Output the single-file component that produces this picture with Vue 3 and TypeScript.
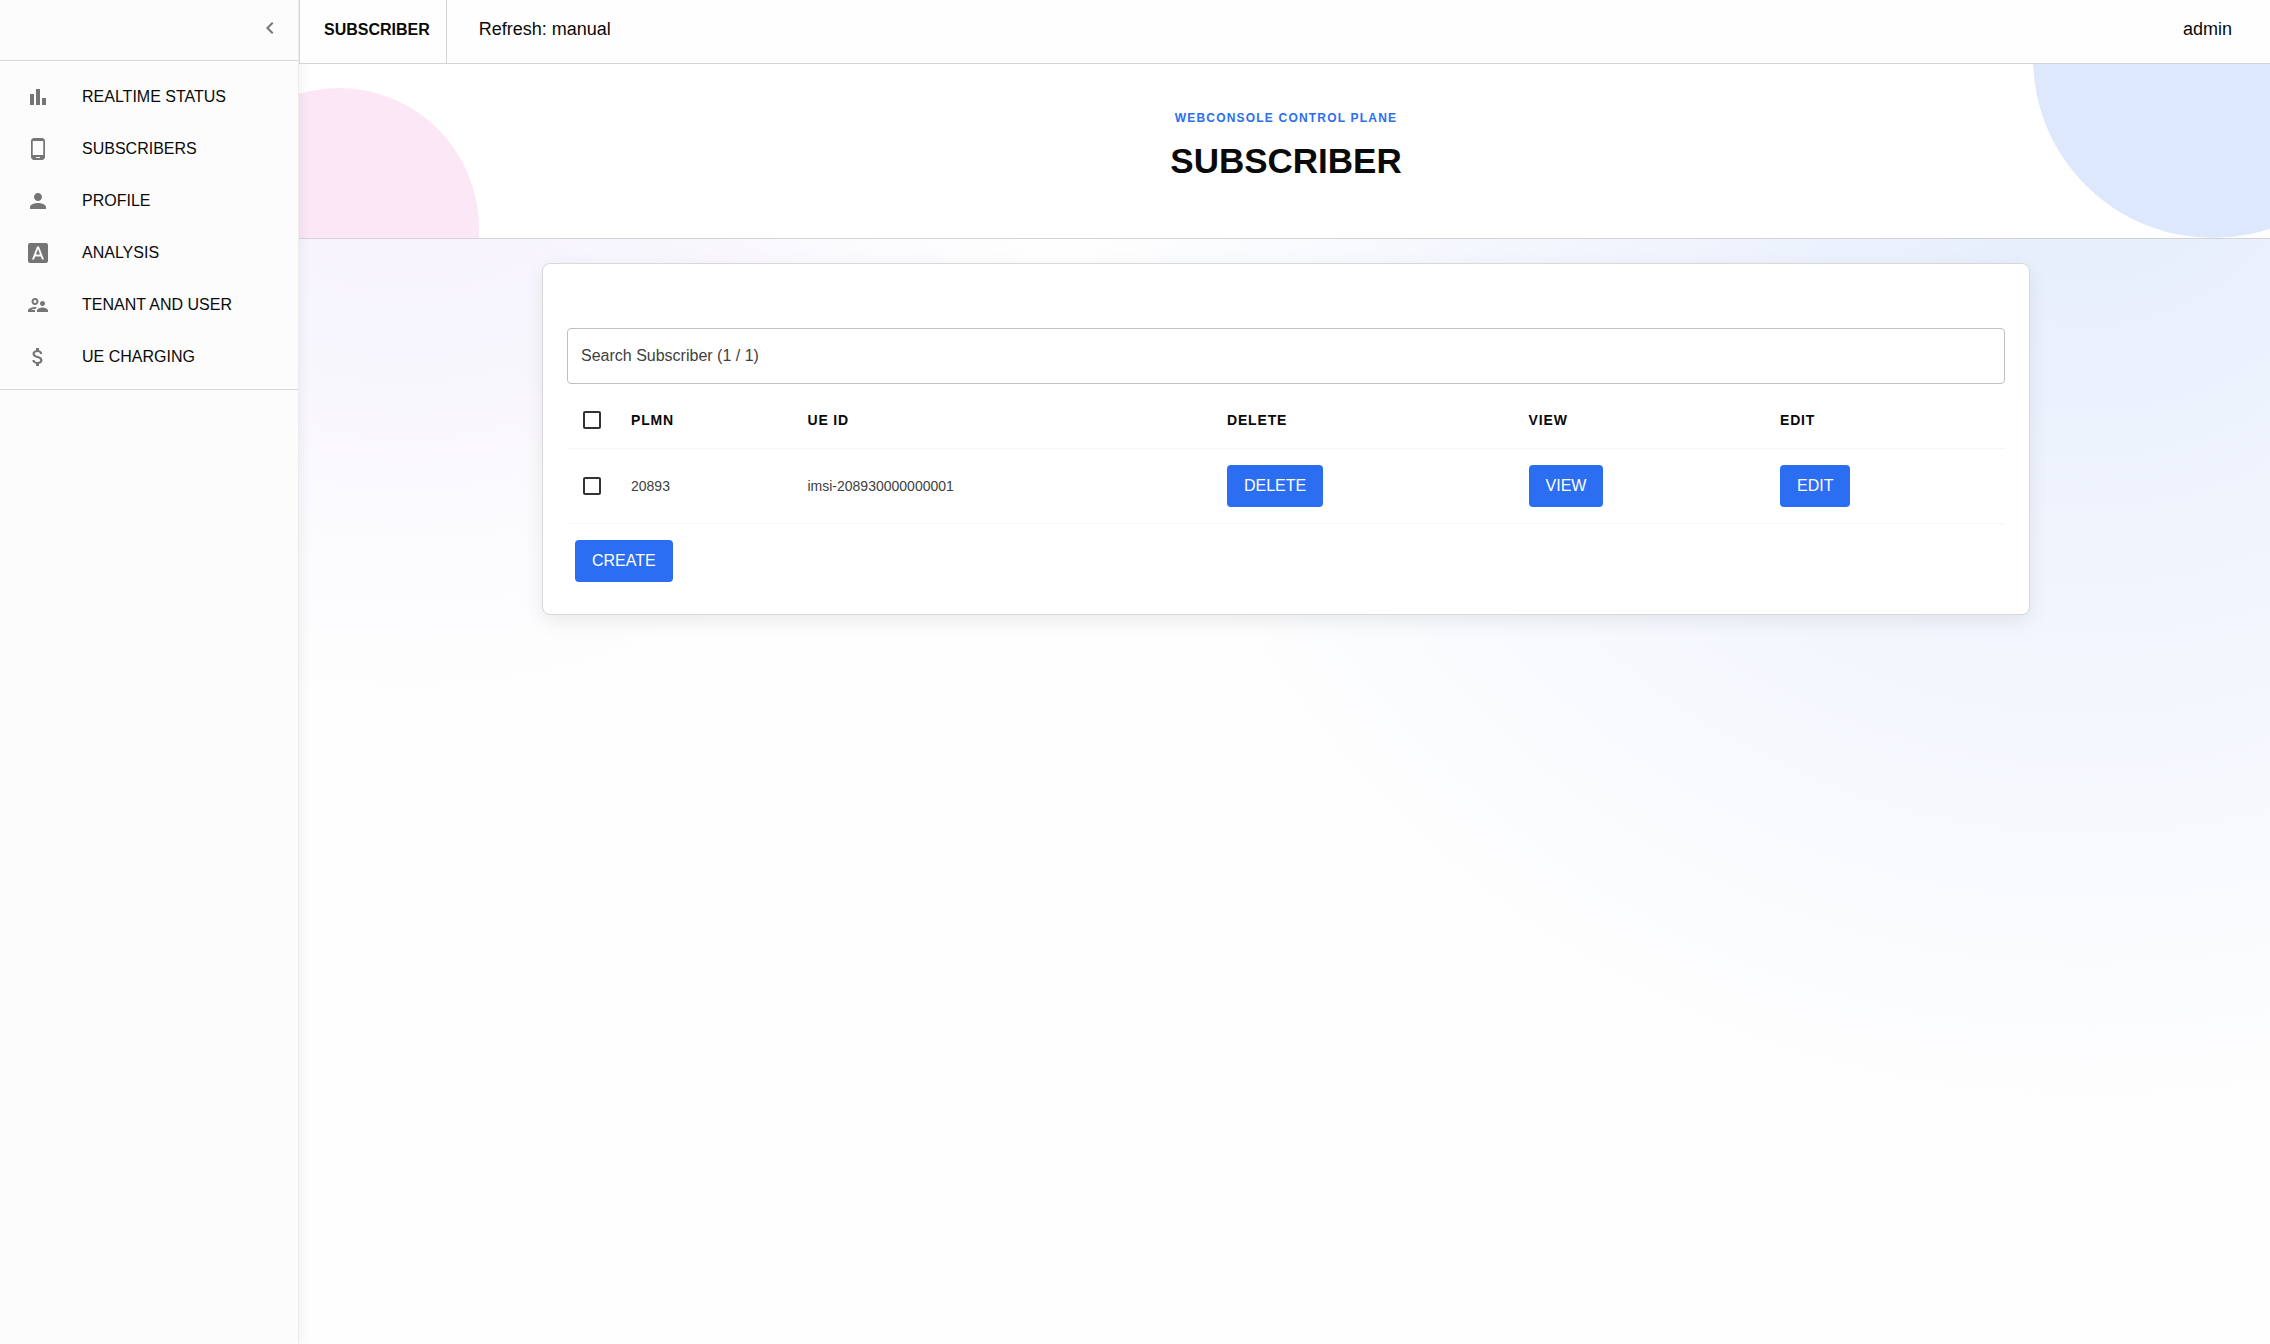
<script setup lang="ts">
import { ref } from 'vue'

interface NavItem {
  label: string
  icon: string
}

interface Subscriber {
  plmn: string
  ueId: string
}

const navItems: NavItem[] = [
  { label: 'REALTIME STATUS', icon: 'M4 9h4v11H4zm12 4h4v7h-4zm-6-9h4v16h-4z' },
  {
    label: 'SUBSCRIBERS',
    icon: 'M16 1H8C6.34 1 5 2.34 5 4v16c0 1.66 1.34 3 3 3h8c1.66 0 3-1.34 3-3V4c0-1.66-1.34-3-3-3zm-2 20h-4v-1h4v1zm3.25-3H6.75V4h10.5v14z',
  },
  {
    label: 'PROFILE',
    icon: 'M12 12c2.21 0 4-1.79 4-4s-1.79-4-4-4-4 1.79-4 4 1.79 4 4 4zm0 2c-2.67 0-8 1.34-8 4v2h16v-2c0-2.66-5.33-4-8-4z',
  },
  {
    label: 'ANALYSIS',
    icon: 'M9.93 13.5h4.14L12 7.98zM20 2H4c-1.1 0-2 .9-2 2v16c0 1.1.9 2 2 2h16c1.1 0 2-.9 2-2V4c0-1.1-.9-2-2-2zm-4.05 16.5l-1.14-3H9.17l-1.12 3H5.96l5.11-13h1.86l5.11 13h-2.09z',
  },
  {
    label: 'TENANT AND USER',
    icon: 'M9 12c1.93 0 3.5-1.57 3.5-3.5S10.93 5 9 5 5.5 6.57 5.5 8.5 7.07 12 9 12zm0-5c.83 0 1.5.67 1.5 1.5S9.83 10 9 10s-1.5-.67-1.5-1.5S8.17 7 9 7zm.05 10H4.77c.99-.5 2.7-1 4.23-1 .11 0 .23.01.34.02.34-.73.93-1.33 1.64-1.81-.73-.13-1.42-.21-1.98-.21-2.34 0-7 1.17-7 3.5V19h7v-1.5c0-.17.02-.34.05-.5zm7.45-2.5c-1.84 0-5.5 1.01-5.5 3V19h11v-1.5c0-1.99-3.66-3-5.5-3zm1.21-1.82c.76-.43 1.29-1.24 1.29-2.18C19 9.12 17.88 8 16.5 8S14 9.12 14 10.5c0 .94.53 1.75 1.29 2.18.36.2.77.32 1.21.32s.85-.12 1.21-.32z',
  },
  {
    label: 'UE CHARGING',
    icon: 'M11.8 10.9c-2.27-.59-3-1.2-3-2.15 0-1.09 1.01-1.85 2.7-1.85 1.78 0 2.44.85 2.5 2.1h2.21c-.07-1.72-1.12-3.3-3.21-3.81V3h-3v2.16c-1.94.42-3.5 1.68-3.5 3.61 0 2.31 1.91 3.46 4.7 4.13 2.5.6 3 1.48 3 2.41 0 .69-.49 1.79-2.7 1.79-2.06 0-2.87-.92-2.98-2.1h-2.2c.12 2.19 1.76 3.42 3.68 3.83V21h3v-2.15c1.95-.37 3.5-1.5 3.5-3.55 0-2.84-2.43-3.81-4.7-4.4z',
  },
]

const subscribers: Subscriber[] = [{ plmn: '20893', ueId: 'imsi-208930000000001' }]

const search = ref('')
</script>

<template>
  <div class="shell">
    <aside class="sidebar">
      <div class="sidebar-top">
        <button class="collapse" type="button" aria-label="Collapse menu">
          <svg viewBox="0 0 24 24" class="icon" aria-hidden="true">
            <path d="M15.41 7.41L14 6l-6 6 6 6 1.41-1.41L10.83 12z" />
          </svg>
        </button>
      </div>
      <nav class="nav">
        <a v-for="item in navItems" :key="item.label" href="#" class="nav-item">
          <svg viewBox="0 0 24 24" class="icon" aria-hidden="true"><path :d="item.icon" /></svg>
          <span class="nav-label">{{ item.label }}</span>
        </a>
      </nav>
    </aside>

    <div class="main">
      <header class="topbar">
        <div class="topbar-title">SUBSCRIBER</div>
        <div class="topbar-refresh">Refresh: manual</div>
        <div class="topbar-user">admin</div>
      </header>

      <section class="hero">
        <p class="eyebrow">WEBCONSOLE CONTROL PLANE</p>
        <h1 class="hero-title">SUBSCRIBER</h1>
      </section>

      <main class="content">
        <section class="card">
          <input
            v-model="search"
            class="search"
            type="text"
            placeholder="Search Subscriber (1 / 1)"
            aria-label="Search Subscriber"
          />
          <table class="table">
            <thead>
              <tr>
                <th class="check-cell"><input type="checkbox" class="check" aria-label="Select all" /></th>
                <th>PLMN</th>
                <th>UE ID</th>
                <th>DELETE</th>
                <th>VIEW</th>
                <th>EDIT</th>
              </tr>
            </thead>
            <tbody>
              <tr v-for="row in subscribers" :key="row.ueId">
                <td class="check-cell">
                  <input type="checkbox" class="check" :aria-label="`Select ${row.ueId}`" />
                </td>
                <td>{{ row.plmn }}</td>
                <td>{{ row.ueId }}</td>
                <td><button type="button" class="btn">DELETE</button></td>
                <td><button type="button" class="btn">VIEW</button></td>
                <td><button type="button" class="btn">EDIT</button></td>
              </tr>
            </tbody>
          </table>
          <div class="actions">
            <button type="button" class="btn">CREATE</button>
          </div>
        </section>
      </main>
    </div>
  </div>
</template>

<style>
body {
  margin: 0;
  font-family: 'Liberation Sans', Arial, sans-serif;
  color: #0a0a0a;
}
</style>

<style scoped>
*,
*::before,
*::after {
  box-sizing: border-box;
}

.shell {
  display: flex;
  isolation: isolate;
  min-height: 100vh;
  overflow: hidden;
  background:
    radial-gradient(circle at 18% 4%, rgba(139, 92, 246, 0.09), transparent 29%),
    radial-gradient(circle at 92% 8%, rgba(44, 110, 242, 0.12), transparent 42%),
    #fefefe;
}

.sidebar {
  flex: none;
  width: 299px;
  border-right: 1px solid #ececec;
  background: #fcfcfc;
  box-shadow: 2px 0 12px rgba(0, 0, 0, 0.06);
}

.sidebar-top {
  display: flex;
  align-items: flex-start;
  justify-content: flex-end;
  height: 61px;
  padding: 16px 16px 0;
  border-bottom: 1px solid #d9d9d9;
}

.collapse {
  display: flex;
  padding: 0;
  border: 0;
  background: none;
  cursor: pointer;
}

.icon {
  display: block;
  width: 24px;
  height: 24px;
  fill: #757575;
}

.nav {
  padding: 10px 0 6px;
  border-bottom: 1px solid #d9d9d9;
}

.nav-item {
  display: flex;
  align-items: center;
  gap: 32px;
  height: 52px;
  padding: 0 26px;
  color: inherit;
  text-decoration: none;
}

.nav-label {
  font-size: 16px;
  line-height: 24px;
}

.main {
  flex: 1;
  min-width: 0;
  margin-right: -3px;
}

.topbar {
  position: relative;
  display: flex;
  height: 64px;
  border-left: 1px solid #d4d4d4;
  border-bottom: 1px solid #d4d4d4;
  background: #fefefe;
  line-height: 58px;
}

.topbar-title {
  padding: 0 16px 0 24px;
  border-right: 1px solid #d4d4d4;
  font-size: 16px;
  font-weight: 700;
  line-height: 60px;
}

.topbar-refresh {
  padding-left: 32px;
  font-size: 18px;
}

.topbar-user {
  margin-left: auto;
  padding-right: 41px;
  font-size: 18px;
}

.hero {
  position: relative;
  z-index: -1;
  height: 175px;
  padding-top: 44px;
  border-bottom: 1px solid #d4d4d4;
  background: #fff;
  overflow: hidden;
  text-align: center;
}

.hero::before,
.hero::after {
  content: '';
  position: absolute;
  border-radius: 50%;
}

.hero::before {
  left: -100px;
  bottom: -130px;
  width: 280px;
  height: 280px;
  background: #fbe7f6;
}

.hero::after {
  right: -120px;
  bottom: 0;
  width: 360px;
  height: 360px;
  background: #dde8fc;
}

.eyebrow {
  margin: 0;
  color: #2c6ef2;
  font-size: 12px;
  font-weight: 700;
  line-height: 20px;
  letter-spacing: 0.1em;
}

.hero-title {
  margin: 12px 0 0;
  font-size: 35px;
  font-weight: 700;
  line-height: 42px;
}

.content {
  max-width: 1536px;
  margin: 0 auto;
  padding: 24px;
}

.card {
  padding: 64px 24px 32px;
  border: 1px solid #d9d9d9;
  border-radius: 8px;
  background: #fff;
  box-shadow: 0 6px 20px rgba(0, 0, 0, 0.08);
}

.search {
  display: block;
  width: 100%;
  height: 56px;
  padding: 0 13px;
  border: 1px solid #c0c0c0;
  border-radius: 4px;
  background: #fff;
  color: #404040;
  font: 16px 'Liberation Sans', Arial, sans-serif;
}

.search::placeholder {
  color: #404040;
  opacity: 1;
}

.table {
  width: 100%;
  border-collapse: separate;
  border-spacing: 0;
  color: #404040;
  font-size: 14px;
  line-height: 20px;
  text-align: left;
}

th,
td {
  padding: 16px;
  border-bottom: 1px solid #f7f7f7;
}

th {
  height: 65px;
  padding: 12px 16px 4px;
  color: #0a0a0a;
  font-weight: 700;
  letter-spacing: 0.06em;
}

th.check-cell,
td.check-cell {
  width: 48px;
  padding-right: 14px;
}

.check {
  display: block;
  width: 18px;
  height: 18px;
  margin: 0;
  border: 2px solid #333;
  border-radius: 2px;
  appearance: none;
}

.btn {
  display: block;
  height: 42px;
  padding: 0 17px;
  border: 0;
  border-radius: 4px;
  background: #2c6ef2;
  color: #fff;
  font: 16px/42px 'Liberation Sans', Arial, sans-serif;
  cursor: pointer;
}

.actions {
  padding: 16px 8px 0;
}
</style>
